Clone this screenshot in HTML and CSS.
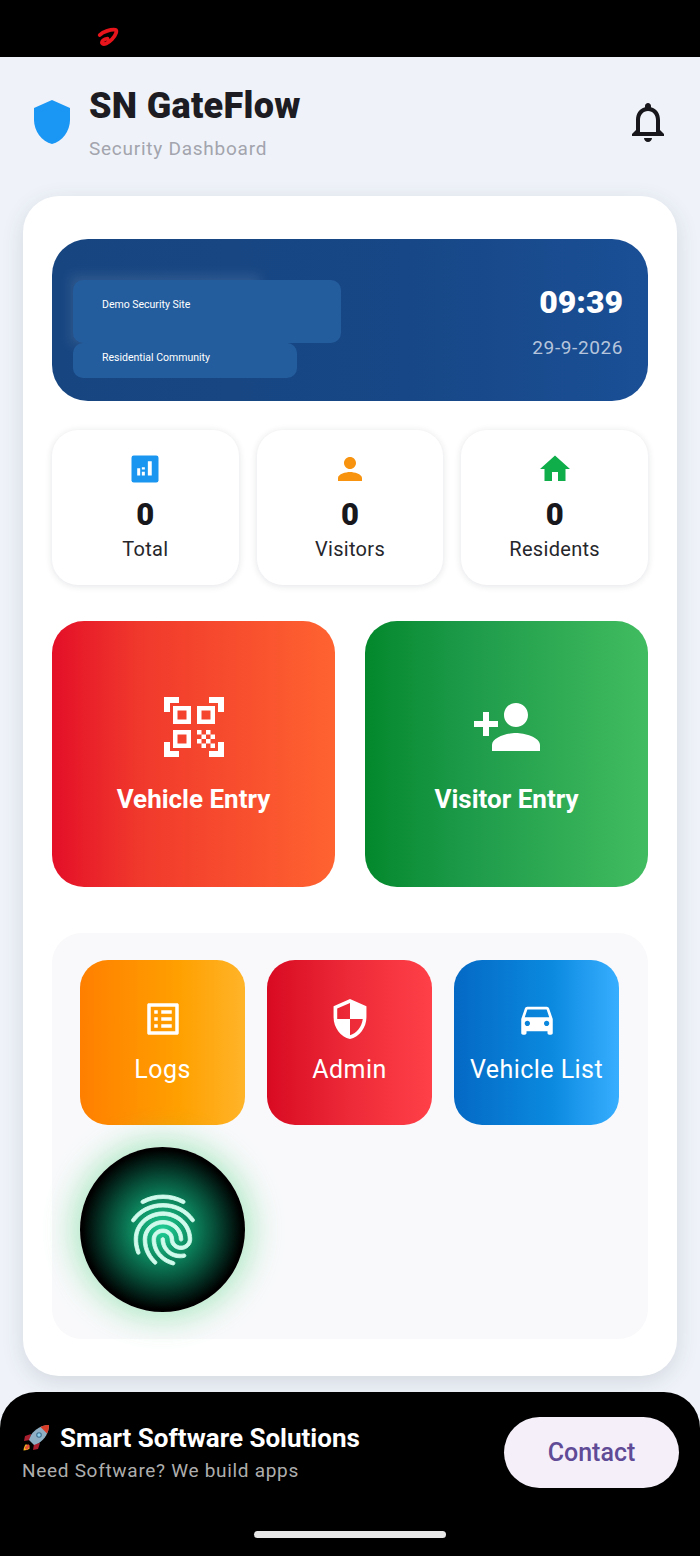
FILE: index.html
```html
<!DOCTYPE html>
<html lang="en">
<head>
<meta charset="utf-8">
<title>SN GateFlow</title>
<link rel="stylesheet" href="styles.css">
</head>
<body>
<div class="status-bar">
  <svg class="airtel" viewBox="0 0 22 20"><path class="airtel-loop" d="M2.800 8C6 4.500 14 2.200 18.500 2.800c1.800.4.800 5-3.500 9.500-3.600 3.800-8.500 6.200-9.800 4-.9-1.700 1.500-4.300 5.300-4.600"/></svg>
</div>
<header class="header">
  <svg class="shield" viewBox="0 0 24 24"><path d="M12 1L3 5v6c0 5.550 3.840 10.740 9 12 5.160-1.260 9-6.450 9-12V5l-9-4z"/></svg>
  <div class="brand">
    <h1 class="brand-title">SN GateFlow</h1>
    <p class="brand-sub">Security Dashboard</p>
  </div>
  <svg class="bell" viewBox="0 0 24 24"><path d="M12 22c1.100 0 2-.9 2-2h-4c0 1.100.9 2 2 2zm6-6v-5c0-3.070-1.630-5.640-4.500-6.320V4c0-.83-.67-1.500-1.500-1.500s-1.500.67-1.500 1.500v.68C7.640 5.360 6 7.920 6 11v5l-2 2v1h16v-1l-2-2zm-2 1H8v-6c0-2.480 1.510-4.500 4-4.500s4 2.020 4 4.500v6z"/></svg>
</header>
<main class="card">
  <section class="banner">
    <div class="banner-glow"></div>
    <div class="site">
      <div class="site-name">Demo Security Site</div>
      <div class="site-type">Residential Community</div>
    </div>
    <div class="clock">
      <div class="clock-time">09:39</div>
      <div class="clock-date">29-9-2026</div>
    </div>
  </section>
  <section class="stats">
    <div class="stat">
      <svg class="stat-icon" viewBox="0 0 24 24"><rect x="3" y="3" width="18" height="18" rx="1.500" fill="#1a96f0"/><path fill="#fff" d="M6.800 11.500h2v4.800h-2zM9.900 10.800h2v1.500h-2zM9.900 13.900h2v2.400h-2zM13.900 6.800h2.600v9.500h-2.600z"/></svg>
      <div class="stat-value">0</div>
      <div class="stat-label">Total</div>
    </div>
    <div class="stat">
      <svg class="stat-icon" viewBox="0 0 24 24"><path fill="#f7930f" d="M12 12c2.210 0 4-1.790 4-4s-1.790-4-4-4-4 1.790-4 4 1.790 4 4 4zm0 2c-2.670 0-8 1.340-8 4v2h16v-2c0-2.660-5.330-4-8-4z"/></svg>
      <div class="stat-value">0</div>
      <div class="stat-label">Visitors</div>
    </div>
    <div class="stat">
      <svg class="stat-icon" viewBox="0 0 24 24"><path fill="#0fae4b" d="M10 20v-6h4v6h5v-8h3L12 3 2 12h3v8z"/></svg>
      <div class="stat-value">0</div>
      <div class="stat-label">Residents</div>
    </div>
  </section>
  <section class="entries">
    <div class="entry entry-vehicle">
      <svg class="entry-icon" viewBox="0 0 24 24"><path d="M9.500 6.500v3h-3v-3h3M11 5H5v6h6V5zm-1.500 9.500v3h-3v-3h3M11 13H5v6h6v-6zm6.500-6.500v3h-3v-3h3M19 5h-6v6h6V5zm-6 8h1.500v1.500H13V13zm1.500 1.500H16V16h-1.500v-1.500zM16 13h1.500v1.500H16V13zm-3 3h1.500v1.500H13V16zm1.500 1.500H16V19h-1.500v-1.500zM16 16h1.500v1.500H16V16zm1.500-1.500H19V16h-1.500v-1.500zm0 3H19V19h-1.500v-1.500zM22 7h-2V4h-3V2h5v5zm0 15v-5h-2v3h-3v2h5zM2 22h5v-2H4v-3H2v5zM2 2v5h2V4h3V2H2z"/></svg>
      <span class="entry-label">Vehicle Entry</span>
    </div>
    <div class="entry entry-visitor">
      <svg class="entry-icon" viewBox="0 0 24 24"><path d="M15 12c2.210 0 4-1.790 4-4s-1.790-4-4-4-4 1.790-4 4 1.790 4 4 4zm-9-2V7H4v3H1v2h3v3h2v-3h3v-2H6zm9 4c-2.670 0-8 1.340-8 4v2h16v-2c0-2.660-5.330-4-8-4z"/></svg>
      <span class="entry-label">Visitor Entry</span>
    </div>
  </section>
  <section class="panel">
    <div class="tile tile-logs">
      <svg class="tile-icon" viewBox="0 0 24 24"><path d="M19 5v14H5V5h14m1.100-2H3.900c-.5 0-.9.4-.9.9v16.200c0 .4.4.9.9.9h16.200c.4 0 .9-.5.9-.9V3.900c0-.5-.5-.9-.9-.9zM11 7h6v2h-6V7zm0 4h6v2h-6v-2zm0 4h6v2h-6zM7 7h2v2H7zm0 4h2v2H7zm0 4h2v2H7z"/></svg>
      <span class="tile-label">Logs</span>
    </div>
    <div class="tile tile-admin">
      <svg class="tile-icon" viewBox="0.500 0.500 23 23"><path d="M12 1L3 5v6c0 5.550 3.840 10.740 9 12 5.160-1.260 9-6.450 9-12V5l-9-4zm0 10.990h7c-.53 4.120-3.280 7.790-7 8.940V12H5V6.300l7-3.110v8.800z"/></svg>
      <span class="tile-label">Admin</span>
    </div>
    <div class="tile tile-list">
      <svg class="tile-icon" viewBox="0 0 24 24"><path d="M18.920 6.010C18.720 5.420 18.160 5 17.500 5h-11c-.66 0-1.210.42-1.420 1.010L3 12v8c0 .55.45 1 1 1h1c.55 0 1-.45 1-1v-1h12v1c0 .55.45 1 1 1h1c.55 0 1-.45 1-1v-8l-2.080-5.990zM6.500 16c-.83 0-1.500-.67-1.500-1.500S5.670 13 6.500 13s1.500.67 1.500 1.500S7.330 16 6.500 16zm11 0c-.83 0-1.500-.67-1.500-1.500s.67-1.500 1.500-1.500 1.500.67 1.500 1.500-.67 1.500-1.500 1.500zM5 11l1.500-4.500h11L19 11H5z"/></svg>
      <span class="tile-label">Vehicle List</span>
    </div>
    <div class="finger">
      <svg class="finger-icon" viewBox="0 0 24 24"><path d="M17.810 4.470c-.08 0-.16-.02-.23-.06C15.660 3.420 14 3 12.010 3c-1.980 0-3.860.47-5.570 1.410-.24.13-.54.04-.68-.2-.13-.24-.04-.55.2-.68C7.820 2.520 9.860 2 12.010 2c2.130 0 3.990.47 6.030 1.520.25.13.34.43.21.67-.09.18-.26.28-.44.28zM3.500 9.720c-.1 0-.2-.03-.29-.09-.23-.16-.28-.47-.12-.7.99-1.400 2.250-2.500 3.750-3.270C9.980 4.040 14 4.030 17.150 5.650c1.500.77 2.760 1.860 3.750 3.250.16.22.11.54-.12.7-.23.16-.54.11-.7-.12-.9-1.260-2.040-2.250-3.390-2.940-2.870-1.470-6.540-1.470-9.400.01-1.360.7-2.500 1.700-3.400 2.960-.08.14-.23.21-.39.21zm6.250 12.070c-.13 0-.26-.05-.35-.15-.87-.87-1.340-1.430-2.010-2.640-.69-1.230-1.050-2.730-1.050-4.340 0-2.970 2.540-5.390 5.660-5.390s5.660 2.420 5.660 5.390c0 .28-.22.5-.5.5s-.5-.22-.5-.5c0-2.420-2.090-4.390-4.660-4.390s-4.660 1.970-4.660 4.390c0 1.440.32 2.770.93 3.850.64 1.150 1.080 1.640 1.850 2.420.19.2.19.51 0 .71-.11.1-.24.15-.37.15zm7.170-1.850c-1.190 0-2.240-.3-3.100-.89-1.490-1.010-2.380-2.650-2.380-4.390 0-.28.22-.5.5-.5s.5.22.5.5c0 1.410.72 2.740 1.940 3.560.71.48 1.540.71 2.540.71.24 0 .64-.03 1.040-.1.27-.05.53.13.58.41.05.27-.13.53-.41.58-.57.11-1.070.12-1.210.12zM14.910 22c-.04 0-.09-.01-.13-.02-1.590-.44-2.630-1.030-3.720-2.100-1.400-1.390-2.170-3.240-2.170-5.220 0-1.620 1.380-2.940 3.080-2.940 1.700 0 3.080 1.320 3.080 2.940 0 1.070.93 1.940 2.080 1.940s2.080-.87 2.080-1.940c0-3.770-3.250-6.830-7.250-6.830-2.840 0-5.440 1.580-6.610 4.030-.39.81-.59 1.760-.59 2.800 0 .78.07 2.010.67 3.610.1.26-.03.55-.29.64-.26.1-.55-.04-.64-.29-.49-1.310-.73-2.610-.73-3.960 0-1.200.23-2.290.68-3.240 1.330-2.790 4.280-4.600 7.510-4.600 4.550 0 8.250 3.510 8.250 7.830 0 1.620-1.380 2.940-3.080 2.940s-3.080-1.320-3.080-2.940c0-1.070-.93-1.940-2.080-1.940s-2.080.87-2.080 1.940c0 1.710.66 3.310 1.870 4.510.95.94 1.860 1.460 3.270 1.850.27.07.42.35.35.61-.05.23-.26.38-.47.38z"/></svg>
    </div>
  </section>
</main>
<footer class="promo">
  <div class="promo-row">
    <div class="promo-text">
      <div class="promo-title">
        <svg class="rocket" viewBox="0 0 28 28">
          <path fill="#f5b81f" d="M4 20c-2 2-2.500 5-2.500 6.500 2 0 5-.7 6.500-2.500z"/>
          <path fill="#e2503a" d="M5 26c-1-.5-2-1.500-2.300-2.500L6 20l2 2z"/>
          <path fill="#a81f30" d="M9 10l-6 2-1 5 6-1zM18 19l-2 6-5 1 1-6z"/>
          <path fill="#8fb0c4" d="M27 1C20 1 13 5 9 11l-2 5 5 5 5-2c6-4 10-11 10-18z"/>
          <path fill="#d93d28" d="M27 1c-3 0-6 .6-8.500 2l6.500 6.500C26.400 7 27 4 27 1z"/>
          <circle cx="17" cy="11" r="2.800" fill="#3f6f8f"/>
          <circle cx="17" cy="11" r="1.700" fill="#8fd0ef"/>
        </svg>
        <span>Smart Software Solutions</span>
      </div>
      <div class="promo-sub">Need Software? We build apps</div>
    </div>
    <button class="contact" type="button">Contact</button>
  </div>
  <div class="home-indicator"></div>
</footer>
</body>
</html>
```
FILE: styles.css
```css
* { box-sizing: border-box; }
html, body { margin: 0; padding: 0; }
body {
  width: 700px;
  height: 1556px;
  overflow: hidden;
  background: #eff3f9;
  font-family: Roboto, "Liberation Sans", sans-serif;
  color: #1b1b20;
}
.status-bar {
  height: 57px;
  background: #000;
  padding: 27px 0 0 97px;
}
.airtel { display: block; width: 22px; height: 20px; }
.airtel-loop {
  fill: none;
  stroke: #e8141c;
  stroke-width: 3.800;
  stroke-linecap: round;
  stroke-linejoin: round;
}

.header {
  display: flex;
  align-items: flex-start;
  padding: 28px 28px 35px;
  gap: 13px;
}
.shield { width: 48px; height: 48px; margin-top: 13px; fill: #1a96f5; flex: none; }
.brand { flex: 1; }
.brand-title {
  margin: 0;
  font-size: 36px;
  line-height: 42px;
  font-weight: 900;
  letter-spacing: .3px;
  color: #1c1c22;
}
.brand-sub {
  margin: 10px 0 0;
  font-size: 19px;
  line-height: 24px;
  letter-spacing: .75px;
  color: #a3a4ad;
}
.bell { width: 48px; height: 48px; margin-top: 13px; fill: #17171c; flex: none; }

.card {
  margin: 0 23px;
  padding: 43px 29px 37px;
  background: #fff;
  border-radius: 36px;
  box-shadow: 0 6px 22px rgba(40, 50, 70, .14);
  display: flex;
  flex-direction: column;
}
.banner {
  position: relative;
  overflow: hidden;
  display: flex;
  justify-content: space-between;
  align-items: center;
  padding: 41px 25px 23px 21px;
  border-radius: 36px;
  background: linear-gradient(90deg, #174580 0%, #174786 60%, #1a4f96 100%);
}
.banner-glow {
  position: absolute;
  left: 18px;
  top: 36px;
  width: 190px;
  height: 70px;
  background: rgba(255, 255, 255, .1);
  filter: blur(6px);
}
.site {
  position: relative;
  display: flex;
  flex-direction: column;
  align-items: flex-start;
  color: #fff;
  font-size: 10.500px;
  line-height: 14px;
}
.site-name {
  width: 268px;
  height: 63px;
  padding: 18px 29px 0;
  background: #245d9d;
  border-radius: 10px;
}
.site-type {
  width: 224px;
  height: 35px;
  padding: 8px 29px 0;
  background: #245d9d;
  border-radius: 10px;
}
.clock { text-align: right; margin-bottom: 16px; }
.clock-time {
  font-size: 32px;
  line-height: 38px;
  font-weight: 900;
  color: #fff;
}
.clock-date {
  margin-top: 15px;
  font-size: 19px;
  line-height: 24px;
  letter-spacing: .6px;
  color: #b6c5dc;
}

.stats {
  margin-top: 29px;
  display: grid;
  grid-template-columns: repeat(3, 1fr);
  gap: 18px;
}
.stat {
  display: flex;
  flex-direction: column;
  align-items: center;
  padding: 21px 0 24px;
  background: #fff;
  border-radius: 26px;
  box-shadow: 0 1px 7px rgba(30, 40, 60, .13);
}
.stat-icon { width: 36px; height: 36px; display: block; }
.stat-value {
  margin-top: 10px;
  font-size: 31px;
  line-height: 36px;
  font-weight: 900;
  color: #17171c;
}
.stat-label {
  margin-top: 4px;
  font-size: 20px;
  line-height: 24px;
  letter-spacing: .3px;
  color: #26262b;
}

.entries {
  margin-top: 36px;
  display: grid;
  grid-template-columns: 283px 283px;
  gap: 30px;
}
.entry {
  height: 266px;
  border-radius: 32px;
  display: flex;
  flex-direction: column;
  align-items: center;
  justify-content: center;
  gap: 21px;
  color: #fff;
  padding-bottom: 4px;
}
.entry-vehicle { background: linear-gradient(90deg, #e40f28 0%, #f0382c 30%, #ff6330 100%); }
.entry-visitor { background: linear-gradient(90deg, #03882c 0%, #1d9a49 35%, #41bc60 100%); }
.entry-icon { width: 72px; height: 72px; fill: #fff; display: block; }
.entry-label { font-size: 26px; line-height: 30px; font-weight: 700; }

.panel {
  margin-top: 46px;
  padding: 27px 29px 27px 28px;
  background: #f9f9fb;
  border-radius: 30px;
  display: grid;
  grid-template-columns: repeat(3, 1fr);
  gap: 22px;
}
.tile {
  height: 165px;
  border-radius: 28px;
  display: flex;
  flex-direction: column;
  align-items: center;
  justify-content: center;
  gap: 15px;
  padding-bottom: 2px;
  color: #fff;
}
.tile-logs { background: linear-gradient(90deg, #ff7f00 0%, #ffa000 60%, #ffb429 100%); }
.tile-admin { background: linear-gradient(90deg, #d80a22 0%, #ed2a38 50%, #ff4048 100%); }
.tile-list { background: linear-gradient(90deg, #0469c4 0%, #0b8ae0 60%, #38aeff 100%); }
.tile-icon { width: 42px; height: 42px; fill: #fff; display: block; }
.tile-label { font-size: 25px; line-height: 30px; letter-spacing: .45px; white-space: nowrap; }
.finger {
  height: 165px;
  width: 165px;
  border-radius: 50%;
  display: flex;
  align-items: center;
  justify-content: center;
  background: radial-gradient(circle closest-side, #1fd096 0%, #0d8a60 35%, #064a36 65%, #000 97%);
  box-shadow: 0 0 32px 6px rgba(70, 210, 120, .45);
}
.finger-icon {
  width: 84px;
  height: 84px;
  fill: #d0faec;
  stroke: #d0faec;
  stroke-width: .25;
  display: block;
}

.promo {
  margin-top: 16px;
  height: 164px;
  padding: 25px 22px 18px;
  background: #000;
  border-radius: 36px 36px 0 0;
  display: flex;
  flex-direction: column;
  align-items: center;
}
.promo-row {
  width: 657px;
  margin-right: -1px;
  display: flex;
  justify-content: space-between;
  align-items: center;
}
.promo-title {
  display: flex;
  align-items: center;
  gap: 10px;
  font-size: 26px;
  line-height: 30px;
  font-weight: 700;
  color: #fff;
}
.rocket { width: 28px; height: 28px; flex: none; }
.promo-sub {
  margin-top: 6px;
  font-size: 19px;
  line-height: 24px;
  letter-spacing: .7px;
  color: #aeaeae;
}
.contact {
  width: 175px;
  height: 71px;
  border: 0;
  padding: 0;
  border-radius: 36px;
  background: #f5effa;
  font: 500 25px/30px Roboto, "Liberation Sans", sans-serif;
  color: #5f4b96;
}
.home-indicator {
  margin-top: 43px;
  width: 192px;
  height: 7px;
  border-radius: 4px;
  background: #e8e8e8;
}
```
